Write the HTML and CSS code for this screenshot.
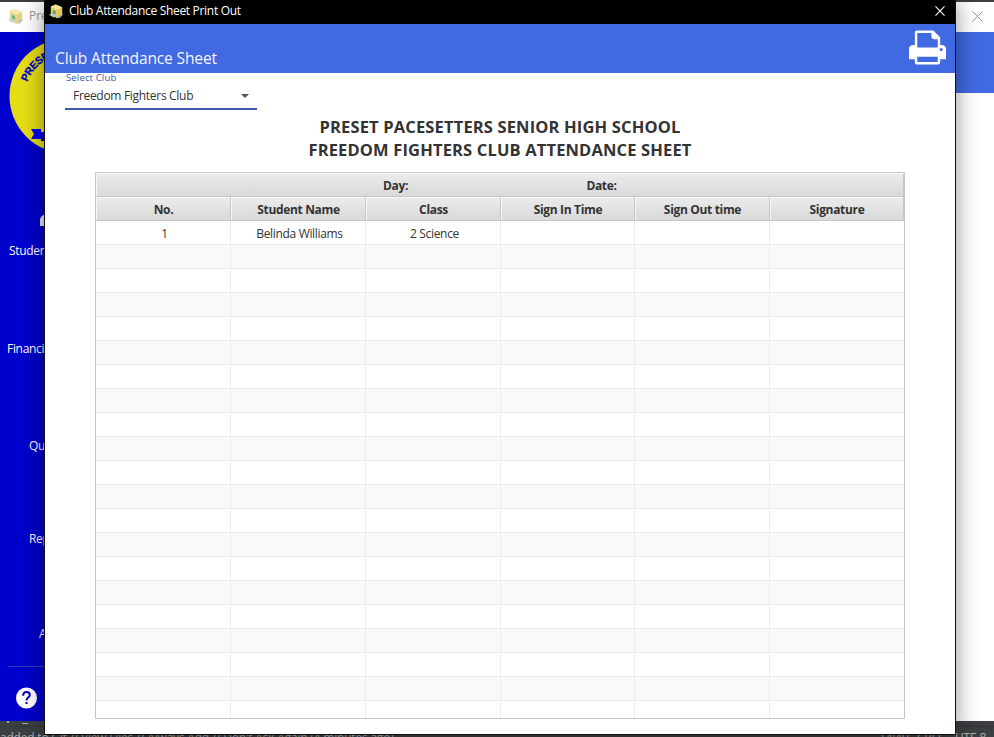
FILE: index.html
```html
<!DOCTYPE html>
<html lang="en">
<head>
<meta charset="utf-8">
<title>Club Attendance Sheet Print Out</title>
<link rel="stylesheet" href="styles.css">
</head>
<body>
<svg width="0" height="0" class="defs">
  <symbol id="box" viewBox="0 0 16 16">
    <path d="M2 3 7 1l7 3v8l-5 4-7-4z" fill="#d9bd55"/>
    <path d="m2 4 5-3 7 3-5 3z" fill="#f6e69a"/>
    <path d="m9 7 5-3v8l-5 3z" fill="#e3c65c"/>
    <path d="m2 4 7 3v8l-7-3z" fill="#dccb7a"/>
    <path d="m4 7 3 1v4l-3-1z" fill="#4aa64c"/>
    <path d="m0 12 4-2 4 3-3 2z" fill="#b9cbbd"/>
    <path d="m10 14 4-3 1 1-4 4z" fill="#98a6bd"/>
  </symbol>
</svg>

<div class="desktop">
  <div class="app">
    <div class="app-title">
      <svg class="app-icon"><use href="#box"/></svg><span>Preset</span>
      <svg class="app-close" viewBox="0 0 11 11"><path d="M.5.5l10 10M10.500.5l-10 10"/></svg>
    </div>
    <div class="app-body">
      <nav class="sidebar">
        <svg class="logo" viewBox="0 0 116 116">
          <circle cx="58" cy="58" r="57.500" fill="#e6de14"/>
          <path id="arc" d="M18.500 44A42 42 0 0 1 97.500 44" fill="none"/>
          <text class="logo-text"><textPath href="#arc">PRESET PACESETTERS</textPath></text>
          <path d="M22 91h10v3h10v9H32v-2H22l3-5z" fill="#0000f0"/>
          <path d="M39 95q-3 1-3 4t4 3" fill="none" stroke="#e6de14"/>
        </svg>
        <svg class="person" viewBox="0 0 24 12"><path d="M0 12V5Q2 0 7 0h10q7 2 7 12z" fill="#e4e4e4"/></svg>
        <span class="item students">Students</span>
        <span class="item finance">Financials</span>
        <span class="item queries">Queries</span>
        <span class="item reports">Reports</span>
        <span class="item about">About</span>
        <div class="rule"></div>
        <svg class="help" viewBox="0 0 22 22"><circle cx="10.500" cy="11" r="10.500" fill="#fff"/><path d="M7.200 8.700q0-3.700 3.300-3.700t3.300 3c0 2.600-3.300 2.600-3.300 5.500" fill="none" stroke="#0000cd" stroke-width="2"/><path d="M9.500 15h2v2h-2z" fill="#0000cd"/></svg>
      </nav>
      <main class="content"><div class="content-bar"></div></main>
    </div>
  </div>
  <footer class="status">
    <div class="status-top"><i></i><b></b></div>
    <div class="status-row"><span class="msg">added to Git // View Files // Always Add // Don't Ask Again (4 minutes ago)</span><span class="pos">14:40</span><span class="crlf">CRLF</span><span>UTF-8</span></div>
  </footer>

  <section class="dialog">
    <header class="dialog-title">
      <svg class="dialog-icon"><use href="#box"/></svg><span>Club Attendance Sheet Print Out</span>
      <svg class="dialog-close" viewBox="0 0 11 11"><path d="M.5.5l10 10M10.500.5l-10 10"/></svg>
    </header>
    <div class="banner">
      <h1>Club Attendance Sheet</h1>
      <svg class="printer" viewBox="0 0 38 36">
        <path d="M6 2Q6 0 8 0h17l7 7v8h1q5 0 5 4v10.500h-6V33q0 2-2 2H8q-2 0-2-2v-3.500H0V19q0-4 5-4h1z" fill="#fff"/>
        <path d="M8.500 2.500H23v4q0 2.500 2.500 2.500H29.500v8.500h-21zM8.500 27h21v5.500h-21z" fill="#4169e1"/>
        <circle cx="33" cy="19.500" r="1.600" fill="#4169e1"/>
      </svg>
    </div>
    <div class="form">
      <label>Select Club</label>
      <div class="select"><span>Freedom Fighters Club</span><i></i></div>
    </div>
    <div class="headings"><h2 class="school">PRESET PACESETTERS SENIOR HIGH SCHOOL</h2><h2 class="sheet">FREEDOM FIGHTERS CLUB ATTENDANCE SHEET</h2></div>
    <div class="table">
      <div class="group"><span>Day:</span><span>Date:</span></div>
      <div class="row head"><div>No.</div><div>Student Name</div><div>Class</div><div>Sign In Time</div><div>Sign Out time</div><div>Signature</div></div>
      <div class="row"><div>1</div><div>Belinda Williams</div><div>2 Science</div><div></div><div></div><div></div></div>
      <div class="row"><div></div><div></div><div></div><div></div><div></div><div></div></div>
      <div class="row"><div></div><div></div><div></div><div></div><div></div><div></div></div>
      <div class="row"><div></div><div></div><div></div><div></div><div></div><div></div></div>
      <div class="row"><div></div><div></div><div></div><div></div><div></div><div></div></div>
      <div class="row"><div></div><div></div><div></div><div></div><div></div><div></div></div>
      <div class="row"><div></div><div></div><div></div><div></div><div></div><div></div></div>
      <div class="row"><div></div><div></div><div></div><div></div><div></div><div></div></div>
      <div class="row"><div></div><div></div><div></div><div></div><div></div><div></div></div>
      <div class="row"><div></div><div></div><div></div><div></div><div></div><div></div></div>
      <div class="row"><div></div><div></div><div></div><div></div><div></div><div></div></div>
      <div class="row"><div></div><div></div><div></div><div></div><div></div><div></div></div>
      <div class="row"><div></div><div></div><div></div><div></div><div></div><div></div></div>
      <div class="row"><div></div><div></div><div></div><div></div><div></div><div></div></div>
      <div class="row"><div></div><div></div><div></div><div></div><div></div><div></div></div>
      <div class="row"><div></div><div></div><div></div><div></div><div></div><div></div></div>
      <div class="row"><div></div><div></div><div></div><div></div><div></div><div></div></div>
      <div class="row"><div></div><div></div><div></div><div></div><div></div><div></div></div>
      <div class="row"><div></div><div></div><div></div><div></div><div></div><div></div></div>
      <div class="row"><div></div><div></div><div></div><div></div><div></div><div></div></div>
      <div class="row"><div></div><div></div><div></div><div></div><div></div><div></div></div>
    </div>
  </section>
</div>
</body>
</html>
```

FILE: styles.css
```css
* { box-sizing: border-box; }
body { margin: 0; overflow: hidden; font: 12px/16px "Open Sans", "Noto Sans", sans-serif; color: #333; }
h1, h2 { margin: 0; }
svg { display: block; flex: none; }
.defs { position: absolute; }
.desktop { position: relative; width: 994px; height: 737px; overflow: hidden; background: #3c3f41; padding-top: 2px; }

.app { height: 719px; background: #fff; display: flex; flex-direction: column; }
.app-title { height: 30px; flex: none; display: flex; align-items: center; padding: 0 11px 2px 8px; color: #999; }
.app-icon { width: 16px; height: 16px; margin-right: 5px; opacity: .8; }
.app-close { width: 11px; height: 11px; margin-left: auto; stroke: #999; }
.app-body { display: flex; flex: 1; min-height: 0; }
.sidebar { width: 125px; background: #0000cd; color: #fff; display: flex; flex-direction: column; align-items: flex-start; overflow: hidden; letter-spacing: -.3px; }
.logo { width: 116px; height: 116px; margin: 6px 0 0 9px; }
.logo-text { font: bold 10.500px "Liberation Sans", sans-serif; fill: #0000cd; stroke: #0000cd; stroke-width: .3px; letter-spacing: -.5px; }
.person { width: 24px; height: 12px; margin: 60px 0 0 40px; }
.item { height: 16px; }
.students { margin: 17px 0 0 9px; }
.finance { margin: 82px 0 0 7px; }
.queries { margin: 81px 0 0 29px; }
.reports { margin: 77px 0 0 29px; }
.about { margin: 79px 0 0 39px; }
.rule { width: 107px; height: 1px; margin: 24px 0 0 9px; background: #3340a6; }
.help { width: 22px; height: 22px; margin: 20px 0 0 16px; }
.content { flex: 1; }
.content-bar { height: 61px; background: #4169e1; }

.status { height: 16px; color: #a9b0b3; line-height: 14px; overflow: hidden; }
.status-top { height: 6px; border-bottom: 1px solid #323537; display: flex; }
.status-top i { width: 2px; height: 2px; margin-left: 7px; background: #aaa; }
.status-top b { width: 6px; height: 1px; margin: 2px 0 0 13px; background: #aaa; }
.status-row { display: flex; padding: 4px 7px 0 0; white-space: nowrap; letter-spacing: -.2px; }
.msg { width: 879px; }
.pos { width: 38px; }
.crlf { width: 38px; }

.dialog { position: absolute; left: 44px; top: 0; width: 912px; height: 735px; background: #fff; border: 1px solid #111; border-top: 0; box-shadow: 0 2px 22px rgba(0,0,0,.42); }
.dialog-title { height: 24px; background: #000; color: #fff; display: flex; align-items: center; padding: 0 10px 2px 4px; }
.dialog-icon { width: 15px; height: 16px; margin-right: 5px; }
.dialog-title span { letter-spacing: -.31px; }
.dialog-close { width: 10px; height: 10px; margin-left: auto; stroke: #fff; stroke-width: 1.200; }
.banner { height: 49px; background: #4169e1; color: #f4f6ff; display: flex; justify-content: space-between; padding: 6px 9px 0 10px; }
.banner h1 { font-size: 15.500px; font-weight: 400; line-height: 20px; padding-top: 18px; letter-spacing: -.12px; }
.printer { width: 37px; height: 36px; }
.form { height: 37px; padding-left: 20px; }
.form label { display: block; height: 10px; font-size: 9.500px; line-height: 10px; color: #4059a9; padding-left: 1px; letter-spacing: .15px; }
.select { width: 192px; height: 27px; border-bottom: 2px solid #4059a9; display: flex; justify-content: space-between; align-items: center; padding: 0 8px; letter-spacing: -.3px; }
.select i { border: 4px solid transparent; border-top-color: #555; border-bottom: 0; }
.headings { height: 62px; padding-top: 5px; text-align: center; }
.headings h2 { font-size: 16.500px; line-height: 23px; white-space: nowrap; letter-spacing: .15px; }
.table { width: 810px; height: 547px; margin-left: 50px; border: 1px solid #c8c8c8; overflow: hidden; letter-spacing: -.33px; }
.group { height: 24px; display: grid; grid-template-columns: 206px 206px; justify-content: center; text-align: center; font-weight: 700; line-height: 24px; padding: 1px 3px 0 0; background: linear-gradient(#ececec, #d9d9d9); border-bottom: 1px solid #c8c8c8; box-shadow: inset 1px 1px #f7f7f7, inset -1px 0 #c8c8c8; }
.row { height: 24px; display: grid; grid-template: 24px / 135px 135px 135px 134px 135px 134px; text-align: center; line-height: 24px; }
.row > div { border-right: 1px solid #ededed; border-bottom: 1px solid #ededed; white-space: nowrap; padding: 1px 0 0 3px; }
.row:nth-child(even) > div { background: #f9f9f9; }
.row:not(.head) > div:last-child { border-right: 0; }
.row.head > div { padding-left: 1px; font-weight: 700; background: linear-gradient(#ececec, #d9d9d9); border-color: #c8c8c8; box-shadow: inset 1px 1px #f7f7f7; }
```
